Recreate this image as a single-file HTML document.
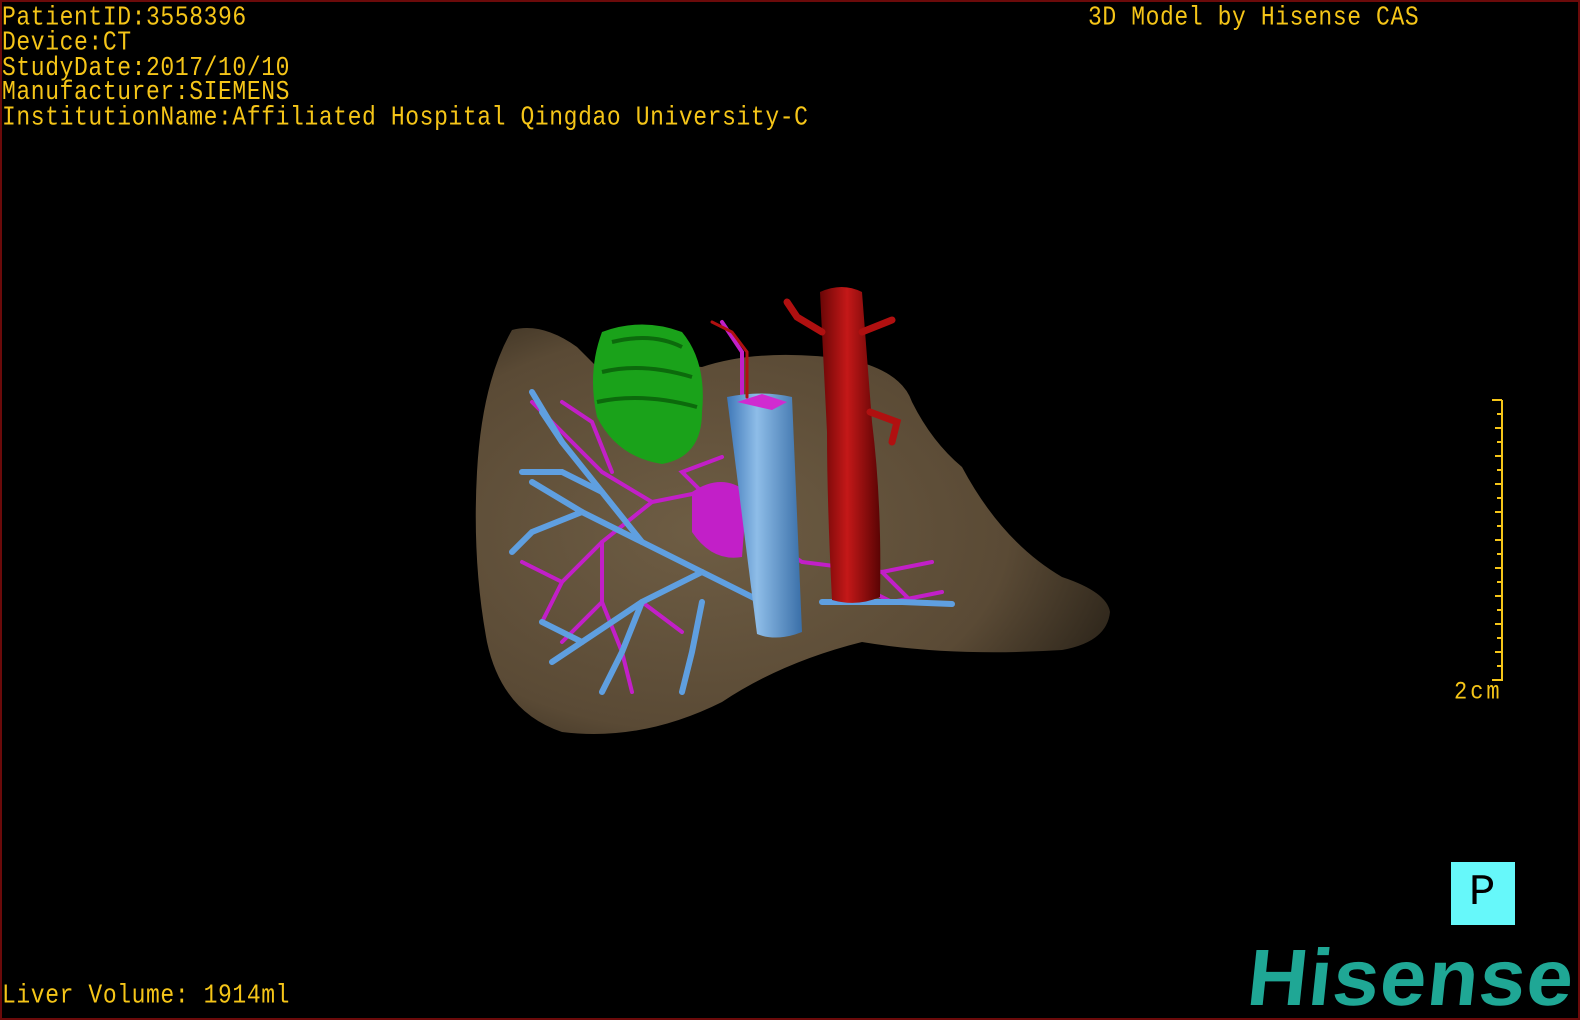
<!DOCTYPE html>
<html><head><meta charset="utf-8"><style>
html,body{margin:0;padding:0;background:#000;}
#c{position:relative;width:1580px;height:1020px;background:#000;overflow:hidden;box-sizing:border-box;border:2px solid #6b0a0a;}
.t{position:absolute;color:#f5c518;font-family:"Liberation Mono",monospace;font-size:23px;line-height:21.8px;letter-spacing:0.6px;white-space:pre;transform:scaleY(1.15);transform-origin:0 0;}
</style></head><body><div id="c">
<div class="t" style="left:0;top:4px">PatientID:3558396
Device:CT
StudyDate:2017/10/10
Manufacturer:SIEMENS
InstitutionName:Affiliated Hospital Qingdao University-C</div>
<div class="t" style="left:1086px;top:4px">3D Model by Hisense CAS</div>
<div class="t" style="left:0;top:982px">Liver Volume: 1914ml</div>
<div class="t" style="left:1452px;top:678px;font-size:22px;letter-spacing:3px">2cm</div>
<svg width="1580" height="1020" style="position:absolute;left:0;top:0">
<defs>
<radialGradient id="lv" cx="0.35" cy="0.5" r="0.7"><stop offset="0" stop-color="#6e5d44"/><stop offset="0.7" stop-color="#5a4a35"/><stop offset="1" stop-color="#2e261b"/></radialGradient>
<linearGradient id="bl" x1="0" x2="1"><stop offset="0" stop-color="#3f78b8"/><stop offset="0.4" stop-color="#8ebde8"/><stop offset="1" stop-color="#3a6fa8"/></linearGradient>
<linearGradient id="rd" x1="0" x2="1"><stop offset="0" stop-color="#6a0606"/><stop offset="0.45" stop-color="#c41818"/><stop offset="1" stop-color="#5a0404"/></linearGradient>
</defs>
<path d="M510 328 Q540 320 575 345 L600 370 Q650 360 700 365 Q760 345 850 358 Q900 370 910 400 Q930 440 960 465 Q1000 540 1060 575 Q1105 590 1108 610 Q1105 640 1060 648 Q950 655 860 640 Q780 660 720 700 Q640 740 560 730 Q500 710 485 640 Q470 560 475 470 Q480 380 510 328Z" fill="url(#lv)"/>
<path d="M600 330 Q640 315 680 330 Q705 360 700 410 Q700 455 660 462 Q615 455 595 415 Q585 370 600 330Z" fill="#1aa21a"/>
<path d="M610 340 Q650 330 680 345 M600 370 Q640 360 690 375 M595 400 Q640 390 695 405" stroke="#0c6a0c" stroke-width="4" fill="none"/>
<g stroke="#c21fc8" stroke-width="4" fill="none" stroke-linecap="round">
<path d="M740 520 L700 490 L650 500 L600 540 L560 580 L540 620"/><path d="M700 490 L680 470 L720 455"/><path d="M650 500 L600 470 L560 430 L530 400"/><path d="M600 540 L600 600 L620 650 L630 690"/><path d="M560 580 L520 560"/><path d="M600 600 L560 640"/><path d="M740 520 L800 560 L880 570 L930 560"/><path d="M880 570 L910 600"/><path d="M850 580 L890 600 L940 590"/><path d="M610 470 L590 420 L560 400"/><path d="M640 600 L680 630"/><path d="M740 400 L740 350 L720 320"/>
</g>
<path d="M690 490 Q720 470 745 490 L740 555 Q710 560 690 530Z" fill="#c21fc8"/>
<g stroke="#5f9fe0" stroke-width="6" fill="none" stroke-linecap="round">
<path d="M760 600 L700 570 L640 540 L580 510 L530 480"/><path d="M700 570 L640 600 L580 640 L550 660"/><path d="M640 540 L600 490 L560 440 L530 390"/><path d="M600 490 L560 470 L520 470"/><path d="M640 600 L620 650 L600 690"/><path d="M700 600 L690 650 L680 690"/><path d="M580 510 L530 530 L510 550"/><path d="M560 440 L540 410"/><path d="M580 640 L540 620"/><path d="M820 600 L900 600 L950 602"/>
</g>
<path d="M725 395 Q760 388 790 395 L800 630 Q775 640 755 632 Z" fill="url(#bl)"/>
<path d="M735 400 L760 392 L785 400 L770 408Z" fill="#d02bd0"/>
<path d="M818 290 Q840 280 860 290 L870 420 Q880 500 878 595 Q855 605 830 598 Q825 500 825 430 Z" fill="url(#rd)"/>
<g stroke="#b01010" stroke-width="7" fill="none" stroke-linecap="round"><path d="M820 330 L795 315 L785 300"/><path d="M860 330 L890 318"/><path d="M868 410 L895 420 L890 440"/><path d="M745 395 L745 350 L730 330 L710 320" stroke-width="3"/></g>
<g stroke="#f5c518" stroke-width="2" fill="none"><path d="M1500 398 L1500 678 L1490 678"/><path d="M1490 398 L1500 398"/>
<path d="M1493 426h7M1493 454h7M1493 482h7M1493 510h7M1493 538h7M1493 566h7M1493 594h7M1493 622h7M1493 650h7M1495 412h5M1495 440h5M1495 468h5M1495 496h5M1495 524h5M1495 552h5M1495 580h5M1495 608h5M1495 636h5M1495 664h5"/></g>
</svg>
<div style="position:absolute;left:1449px;top:860px;width:64px;height:63px;background:#66f8fa;"></div>
<div style="position:absolute;left:1467px;top:866px;font-family:'Liberation Mono',monospace;font-size:44px;color:#000;line-height:50px">P</div>
<div style="position:absolute;left:1250px;top:938px;font-family:'Liberation Sans',sans-serif;font-weight:bold;font-size:80px;line-height:76px;color:#1fa795;letter-spacing:1px;transform:skewX(-6deg) scaleX(1.04);transform-origin:0 0;">Hisense</div>
</div></body></html>
